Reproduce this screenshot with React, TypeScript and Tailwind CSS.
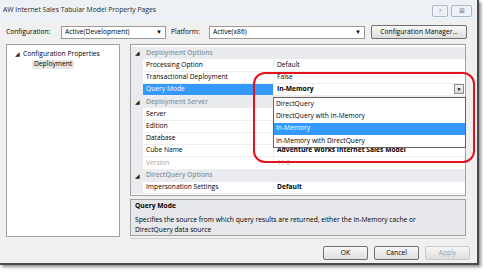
import React from 'react';

type Row = {
  name: string;
  value?: string;
  cat?: boolean;
  bold?: boolean;
  selected?: boolean;
  disabled?: boolean;
};

const rows: Row[] = [
  { name: 'Deployment Options', cat: true },
  { name: 'Processing Option', value: 'Default' },
  { name: 'Transactional Deployment', value: 'False' },
  { name: 'Query Mode', value: 'In-Memory', bold: true, selected: true },
  { name: 'Deployment Server', cat: true },
  { name: 'Server' },
  { name: 'Edition' },
  { name: 'Database' },
  { name: 'Cube Name', value: 'Adventure Works Internet Sales Model', bold: true },
  { name: 'Version', value: '11.0', disabled: true },
  { name: 'DirectQuery Options', cat: true },
  { name: 'Impersonation Settings', value: 'Default', bold: true },
];

const options = ['DirectQuery', 'DirectQuery with In-Memory', 'In-Memory', 'In-Memory with DirectQuery'];

const Arrow = () => <span className="text-[6px] leading-none text-[#222]">◢</span>;

const Combo = ({ text, width }: { text: string; width: string }) => (
  <div className={`${width} flex h-[13px] items-center justify-between border border-[#9a9a9a] bg-white pl-[3px] pr-[3px]`}>
    <span>{text}</span>
    <span className="text-[6px] leading-none">▼</span>
  </div>
);

const Button = ({ label, disabled }: { label: string; disabled?: boolean }) => (
  <div
    className={`flex h-[14px] w-[45px] items-center justify-center rounded-[2px] border bg-gradient-to-b from-[#f8f8f8] to-[#dedede] ${
      disabled ? 'border-[#c8c8c8] text-[#a0a0a0]' : 'border-[#707070] text-[#000]'
    }`}
  >
    {label}
  </div>
);

export default function App() {
  return (
    <div className="relative h-[272px] w-[483px] overflow-hidden bg-white font-['Open_Sans',sans-serif] text-[6.7px] leading-none text-[#000]">
      <div className="flex h-[265px] w-[479px] flex-col border-r-2 border-b-2 border-[#4a4a4a] bg-[#f0f0f0] shadow-[2px_2px_3px_rgba(0,0,0,0.45)]">
        {/* title bar */}
        <div className="flex h-[21px] items-center justify-between bg-[#edf0f4] pl-[3px] pr-[5px]">
          <span className="text-[6.8px] text-[#2a2a2a]">AW Internet Sales Tabular Model Property Pages</span>
          <div className="flex gap-[3px]">
            <div className="flex h-[12px] w-[16px] items-center justify-center rounded-[2px] border border-[#a9b8ca] bg-[#eef2f7] text-[6px] text-[#7a8494]">?</div>
            <div className="flex h-[12px] w-[21px] items-center justify-center rounded-[2px] border border-[#a9b8ca] bg-[#eef2f7] text-[7px] text-[#7a8494]">⊠</div>
          </div>
        </div>

        {/* configuration row */}
        <div className="mt-[4px] flex h-[14px] items-center pl-[6px]">
          <span className="w-[55px]">Configuration:</span>
          <Combo text="Active(Development)" width="w-[105px]" />
          <span className="ml-[5px] w-[38px]">Platform:</span>
          <Combo text="Active(x86)" width="w-[156px]" />
          <div className="ml-[6px] flex h-[14px] w-[96px] items-center justify-center rounded-[2px] border border-[#707070] bg-gradient-to-b from-[#f8f8f8] to-[#dedede]">
            Configuration Manager...
          </div>
        </div>

        {/* body */}
        <div className="mt-[5px] flex pl-[6px]">
          <div className="h-[193px] w-[114px] border border-[#a0a0a0] bg-white pt-[5px]">
            <div className="flex h-[8px] items-center gap-[3px] pl-[8px]">
              <Arrow />
              <span>Configuration Properties</span>
            </div>
            <div className="ml-[25px] mt-[2px] inline-flex h-[9px] items-center rounded-[2px] bg-[#e6e6e6] px-[2px]">Deployment</div>
          </div>

          <div className="ml-[10px] flex w-[336px] flex-col">
            {/* property grid */}
            <div className="h-[152px] border border-[#a0a0a0] bg-white pt-[2px]">
              {rows.map((r) => (
                <div key={r.name} className={`flex h-[12.25px] items-center ${r.cat ? 'bg-[#e9ebee]' : ''}`}>
                  <div className="flex h-full w-[12px] items-center justify-center bg-[#e9ebee]">{r.cat && <Arrow />}</div>
                  {r.cat ? (
                    <span className="pl-[3px] font-semibold text-[#8f9398]">{r.name}</span>
                  ) : (
                    <>
                      <div
                        className={`flex h-full w-[130px] items-center border-b border-[#eeeeee] pl-[3px] ${
                          r.selected ? 'bg-[#3399ff] text-white' : ''
                        } ${r.disabled ? 'text-[#a8a8a8]' : ''}`}
                      >
                        {r.name}
                      </div>
                      <div className="flex h-full flex-1 items-center justify-between border-b border-l border-[#eeeeee] pl-[3px] pr-[1px]">
                        <span className={`${r.bold ? 'font-bold' : ''} ${r.disabled ? 'text-[#b0b0b0]' : ''}`}>{r.value}</span>
                        {r.selected && (
                          <div className="flex h-[10px] w-[10px] items-center justify-center border border-[#8c8c8c] bg-gradient-to-b from-[#f4f4f4] to-[#d8d8d8] text-[5px]">▼</div>
                        )}
                      </div>
                    </>
                  )}
                </div>
              ))}
            </div>

            {/* description */}
            <div className="mt-[3px] h-[37px] border border-[#a0a0a0] bg-[#e6e8ec] pl-[4px] pt-[3px]">
              <div className="font-bold">Query Mode</div>
              <div className="mt-[5px] leading-[10px]">
                Specifies the source from which query results are returned, either the In-Memory cache or
                <br />
                DirectQuery data source
              </div>
            </div>
            <div className="mt-[2px] h-px bg-[#d0d0d0]" />
          </div>
        </div>

        {/* buttons */}
        <div className="mt-[7px] flex justify-end gap-[6px] pr-[7px]">
          <Button label="OK" />
          <Button label="Cancel" />
          <Button label="Apply" disabled />
        </div>
      </div>

      {/* open dropdown list */}
      <div className="absolute left-[273px] top-[97px] w-[193px] border border-[#646464] bg-white">
        {options.map((o) => (
          <div key={o} className={`flex h-[12.25px] items-center pl-[2px] ${o === 'In-Memory' ? 'bg-[#3399ff] text-white' : ''}`}>
            {o}
          </div>
        ))}
      </div>

      {/* red annotation */}
      <div className="pointer-events-none absolute left-[253px] top-[72px] h-[91px] w-[222px] rounded-[12px] border-[2.5px] border-[#e3101e]" />
    </div>
  );
}
